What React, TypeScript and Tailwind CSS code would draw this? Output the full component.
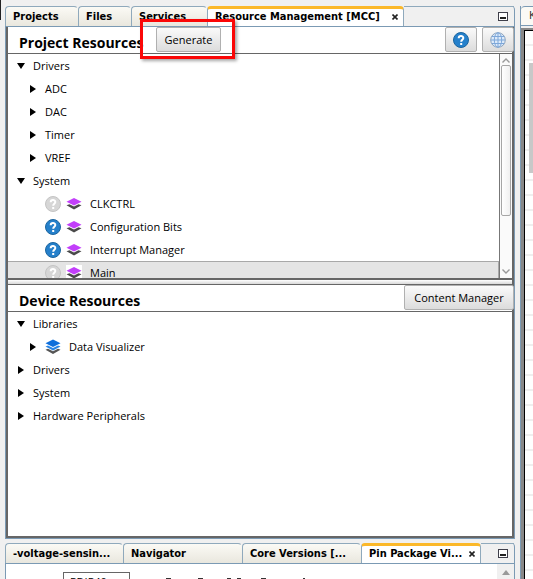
import { ReactNode } from "react";

const ui = "font-['Open_Sans','Noto_Sans',sans-serif]";

function Tab({ label, className, active = false }: { label: string; className: string; active?: boolean }) {
  return (
    <div
      role="tab"
      aria-selected={active}
      className={`flex h-5 shrink-0 items-center rounded-t-sm border-x border-t pl-[7px] font-['DejaVu_Sans_Condensed','Open_Sans',sans-serif] text-[11px] leading-4 font-bold ${
        active
          ? "border-t-[3px] border-x-[#8fa9bc] border-t-[#fbb829] bg-white pb-px"
          : "border-[#8fa9bc] border-r-transparent bg-linear-to-b from-[#fbfaf5] to-[#e9e7de]"
      } ${className}`}
    >
      <span className="whitespace-nowrap">{label}</span>
      {active && (
        <button aria-label={`Close ${label}`} className="ml-auto pr-[5px]">
          <svg width="6" height="6" viewBox="0 0 6 6" stroke="#222" strokeWidth="1.6">
            <path d="M0.5 0.5L5.5 5.5M5.5 0.5L0.5 5.5" />
          </svg>
        </button>
      )}
    </div>
  );
}

function TabBar({ children }: { children: ReactNode }) {
  return (
    <div role="tablist" className="flex h-5 shrink-0 rounded-t-sm border-r border-[#7b9ab4]">
      {children}
      <div className="flex min-w-0 flex-1 items-center justify-end border-t border-[#8fa9bc] pr-1.5">
        <button aria-label="Minimize">
          <svg width="10" height="9" viewBox="0 0 10 9">
            <rect x="0.5" y="0.5" width="9" height="8" fill="#fff" stroke="#3f3f4a" />
            <rect x="2" y="5" width="6" height="2" fill="#222" />
          </svg>
        </button>
      </div>
    </div>
  );
}

function Help({ muted = false }: { muted?: boolean }) {
  return (
    <svg width="16" height="16" viewBox="0 0 16 16" className="shrink-0">
      <circle cx="8" cy="8" r="7.5" fill={muted ? "#d6d6d6" : "#2580cb"} stroke={muted ? "#c4c4c4" : "#1b659f"} />
      <path d="M5.7 6.2C5.7 3.3 10.3 3.3 10.3 6C10.3 7.8 8.2 7.8 8.2 9.8" fill="none" stroke="#fff" strokeWidth="2" />
      <rect x="7.2" y="11" width="2" height="2" fill="#fff" />
    </svg>
  );
}

function Globe() {
  return (
    <svg width="16" height="16" viewBox="0 0 16 16" fill="none" stroke="#7da7d9">
      <circle cx="8" cy="8" r="7.3" fill="#dceafa" stroke="#8ba3be" />
      <ellipse cx="8" cy="8" rx="3.7" ry="7.3" />
      <path d="M8 1V15M1 8H15M2 4.5H14M2 11.5H14" />
    </svg>
  );
}

function Layers({ blue = false }: { blue?: boolean }) {
  return blue ? (
    <svg width="16" height="16" viewBox="0 0 16 16" className="shrink-0">
      <path d="M0.5 10.8L3 9.8L8 12.2L13 9.8L15.5 10.8L8 15Z" fill="#555" />
      <path d="M0.5 7.6L3 6.6L8 9L13 6.6L15.5 7.6L8 11.6Z" fill="#2a86e6" />
      <path d="M8 0.5L15.5 4.3L8 8L0.5 4.3Z" fill="#0f6fdb" />
    </svg>
  ) : (
    <svg width="16" height="16" viewBox="0 0 16 16" className="shrink-0">
      <path d="M0.5 9.2L3.5 8.2L8 10.6L12.5 8.2L15.5 9.2L8 13.4Z" fill="#4a4a4a" />
      <path d="M8 2L15.5 5.8L8 9.6L0.5 5.8Z" fill="#c23ffa" />
    </svg>
  );
}

function Arrow({ open = false }: { open?: boolean }) {
  return (
    <svg width="8" height="8" viewBox="0 0 8 8" className="shrink-0">
      <path d={open ? "M0 1H8L4 7Z" : "M1 0V8L7 4Z"} />
    </svg>
  );
}

function Row({ label, level = 0, open = false }: { label: string; level?: number; open?: boolean }) {
  return (
    <li className={`flex h-[23px] items-center gap-2 ${level ? "pl-[21px]" : "pl-[9px]"}`}>
      <Arrow open={open} />
      <span>{label}</span>
    </li>
  );
}

function Leaf({ label, muted = false, selected = false }: { label: string; muted?: boolean; selected?: boolean }) {
  return (
    <li
      className={`flex h-[23px] items-center pl-[37px] ${
        selected ? "border-t border-r border-[#a8a8a8] bg-[#e4e4e4]" : ""
      }`}
    >
      <Help muted={muted} />
      <span className={`mr-2 ml-[5px] ${selected ? "bg-white" : ""}`}>
        <Layers />
      </span>
      <span>{label}</span>
    </li>
  );
}

const button =
  "flex items-center justify-center rounded-xs border border-[#b0b0b0] bg-linear-to-b from-[#fafafa] to-[#dcdcdc]";

function ScrollBar() {
  return (
    <div className="flex w-[13px] shrink-0 flex-col items-center border-l border-[#777] bg-[#fafafa] py-1">
      <svg width="8" height="5" viewBox="0 0 8 5" fill="none" stroke="#999" strokeWidth="1.4">
        <path d="M0.5 4.5L4 1L7.5 4.5" />
      </svg>
      <div className="mt-0.5 h-[151px] w-2.5 rounded-xs border border-[#a6a6a6] bg-linear-to-r from-white to-[#f0f0f0]" />
      <svg width="8" height="5" viewBox="0 0 8 5" fill="none" stroke="#999" strokeWidth="1.4" className="mt-auto">
        <path d="M0.5 0.5L4 4L7.5 0.5" />
      </svg>
    </div>
  );
}

export default function App() {
  return (
    <div className={`flex h-screen overflow-hidden bg-[#f0f0f0] text-[11px] leading-4 text-black ${ui}`}>
      <div className="h-5 w-px shrink-0 bg-[#222]" />
      <main className="ml-1 flex min-w-0 flex-1 flex-col pt-1.5">
        <TabBar>
          <Tab label="Projects" className="w-[73px]" />
          <Tab label="Files" className="w-[53px]" />
          <Tab label="Services" className="w-[76px]" />
          <Tab label="Resource Management [MCC]" className="w-[197px]" active />
        </TabBar>

        <div className="flex min-h-0 flex-1 flex-col border border-[#7b9ab4]">
          <div className="flex min-h-0 flex-1 flex-col border-x-2 border-b-2 border-[#666] bg-white">
            <header className="flex h-[27px] shrink-0 items-start border-b border-[#666] pl-[11px]">
              <h2 className="w-[121px] pt-1.5 text-sm leading-5 font-bold whitespace-nowrap">Project Resources</h2>
              <div className="relative ml-4">
                <button className={`h-[25px] w-[65px] ${button}`}>Generate</button>
                <div className="pointer-events-none absolute -top-2 -left-4 h-10 w-[95px] border-[3px] border-[#fb0707] shadow-[2px_2px_3px_rgba(0,0,0,0.35)]" />
              </div>
              <div className="-mr-0.5 ml-auto flex gap-[5px]">
                <button aria-label="Help" className={`h-[25px] w-8 ${button}`}>
                  <Help />
                </button>
                <button aria-label="Web" className={`h-[25px] w-8 ${button}`}>
                  <Globe />
                </button>
              </div>
            </header>

            <div className="flex h-[224px] shrink-0 overflow-hidden">
              <ul className="min-w-0 flex-1">
                <Row label="Drivers" open />
                <Row label="ADC" level={1} />
                <Row label="DAC" level={1} />
                <Row label="Timer" level={1} />
                <Row label="VREF" level={1} />
                <Row label="System" open />
                <Leaf label="CLKCTRL" muted />
                <Leaf label="Configuration Bits" />
                <Leaf label="Interrupt Manager" />
                <Leaf label="Main" muted selected />
              </ul>
              <ScrollBar />
            </div>

            <div className="h-[7px] shrink-0 border-t-2 border-b border-[#666] bg-linear-to-b from-white to-[#d8d8d8]" />

            <header className="flex h-[27px] shrink-0 items-start border-b border-[#666] pl-[11px]">
              <h2 className="pt-1.5 text-sm leading-5 font-bold whitespace-nowrap">Device Resources</h2>
              <button className={`-mr-0.5 ml-auto h-[25px] w-[110px] ${button}`}>Content Manager</button>
            </header>
            <ul>
              <Row label="Libraries" open />
              <li className="flex h-[23px] items-center gap-2 pl-[21px]">
                <Arrow />
                <Layers blue />
                <span>Data Visualizer</span>
              </li>
              <Row label="Drivers" />
              <Row label="System" />
              <Row label="Hardware Peripherals" />
            </ul>
          </div>
        </div>

        <div className="mt-1 flex shrink-0 flex-col">
          <TabBar>
            <Tab label="-voltage-sensin..." className="w-[118px]" />
            <Tab label="Navigator" className="w-[119px]" />
            <Tab label="Core Versions [..." className="w-[119px]" />
            <Tab label="Pin Package Vi..." className="w-[120px]" active />
          </TabBar>
          <div className="flex h-4 items-start overflow-hidden border-x border-t border-[#7b9ab4] bg-white">
            <select
              aria-label="Package"
              className="mt-2 ml-[57px] h-5 w-[67px] shrink-0 appearance-none border border-[#666] px-1.5 font-['Open_Sans',sans-serif]"
            >
              <option>PDIP40</option>
            </select>
            <svg width="150" height="15" viewBox="0 0 150 15" className="ml-9 shrink-0" fill="#333">
              <path d="M0 14h5v1H0zM32 14h5v1h-5zM61 14h4v1h-4zM71 14h4v1h-4zM95 14h5v1h-5zM137 14h2v1h-2z" />
            </svg>
            <div className="ml-auto flex h-4 w-[17px] justify-center bg-[#f0f0f0] pt-1.5">
              <svg width="8" height="5" viewBox="0 0 8 5" fill="#999">
                <path d="M4 0L8 5H0Z" />
              </svg>
            </div>
          </div>
        </div>
      </main>

      <aside className="mt-1.5 ml-[5px] flex w-[13px] shrink-0 flex-col border-l border-[#7b9ab4]">
        <div className="h-5 overflow-hidden rounded-tl-sm border-t border-b border-[#7b9ab4] bg-[#fbfaf5] pl-2 text-[#222]">
          K
        </div>
        <div className="mt-0.5 flex-1 border-t-2 border-l-3 border-[#888]">
          <div className="h-full border-t border-l border-black bg-[repeating-linear-gradient(to_bottom,white_0_13px,#efefef_13px_15px)]">
            <div className="flex justify-end pt-8">
              <div className="h-[110px] w-1 bg-[#c8c8c8]" />
            </div>
          </div>
        </div>
      </aside>
    </div>
  );
}
